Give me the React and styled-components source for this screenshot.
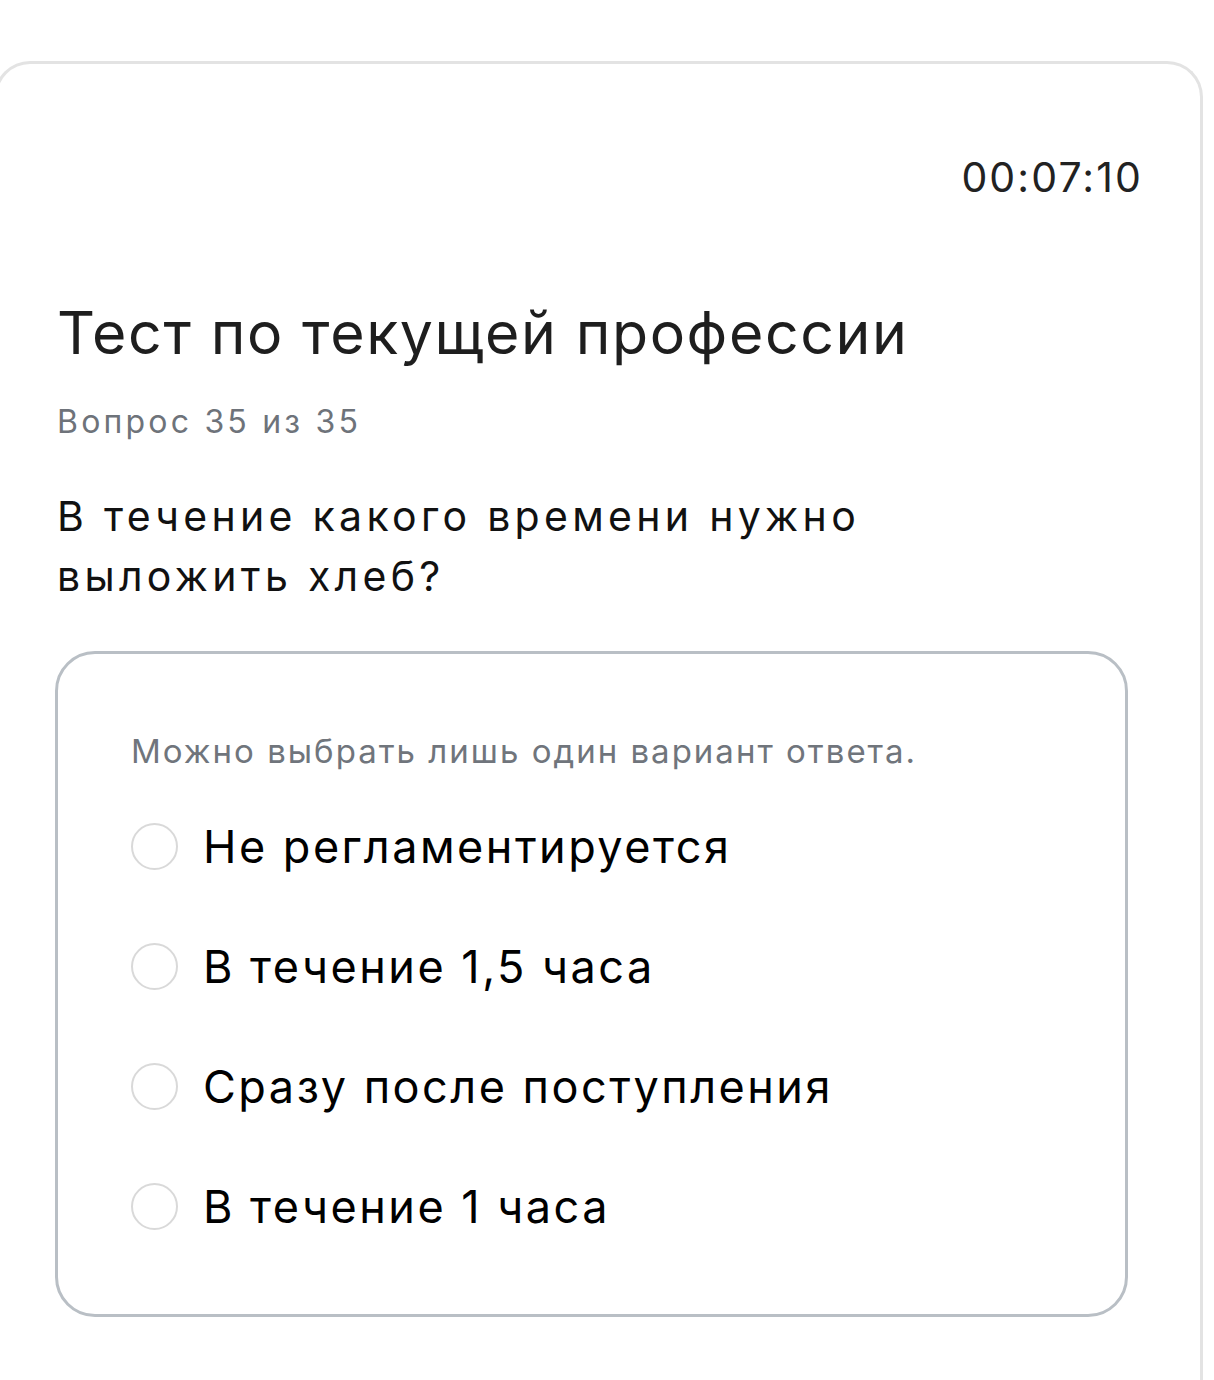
import React from 'react';
import styled, { createGlobalStyle } from 'styled-components';

const GlobalStyle = createGlobalStyle`
  html, body {
    margin: 0;
    padding: 0;
    background: #ffffff;
    overflow: hidden;
  }
  body {
    font-family: Inter, "Noto Sans", sans-serif;
  }
`;

const Page = styled.div`
  padding-top: 61px;
  margin-left: -6px;
  width: 1209px;
`;

const Card = styled.div`
  box-sizing: border-box;
  min-height: 1400px;
  border: 3px solid #e3e3e3;
  border-bottom: none;
  border-radius: 36px 36px 0 0;
  padding: 89px 61px 0 60px;
  display: flex;
  flex-direction: column;
`;

const Timer = styled.div`
  align-self: flex-end;
  margin-right: -4px;
  font-size: 41px;
  line-height: 48px;
  letter-spacing: 2.1px;
  color: #222222;
`;

const Title = styled.h1`
  margin: 97px 0 0;
  font-size: 59px;
  line-height: 70px;
  font-weight: 400;
  letter-spacing: 1.6px;
  color: #1e1e1e;
`;

const Counter = styled.div`
  margin-top: 34px;
  font-size: 32px;
  line-height: 40px;
  letter-spacing: 3.2px;
  color: #6e737a;
`;

const Question = styled.p`
  margin: 44px 0 0;
  max-width: 880px;
  font-size: 41px;
  line-height: 60px;
  letter-spacing: 4.3px;
  color: #111111;
`;

const AnswerBox = styled.div`
  box-sizing: border-box;
  margin: 45px 0 0 -2px;
  width: 1073px;
  border: 3px solid #b9bfc5;
  border-radius: 40px;
  padding: 77px 40px 84px 73px;
  display: flex;
  flex-direction: column;
`;

const Hint = styled.div`
  font-size: 33px;
  line-height: 40px;
  letter-spacing: 2px;
  color: #70757c;
  white-space: nowrap;
`;

const Options = styled.div`
  margin-top: 52px;
  display: flex;
  flex-direction: column;
  gap: 73px;
`;

const Option = styled.label`
  display: flex;
  align-items: center;
  gap: 25px;
  height: 47px;
  cursor: pointer;
`;

const Radio = styled.span`
  box-sizing: border-box;
  flex: none;
  width: 47px;
  height: 47px;
  border-radius: 50%;
  border: 2.5px solid #d9d9d9;
  background: #ffffff;
`;

const OptionText = styled.span`
  font-size: 45px;
  letter-spacing: 2.5px;
  color: #000000;
  white-space: nowrap;
`;

const answers = [
  'Не регламентируется',
  'В течение 1,5 часа',
  'Сразу после поступления',
  'В течение 1 часа',
];

export default function App() {
  return (
    <>
      <GlobalStyle />
      <Page>
        <Card>
          <Timer>00:07:10</Timer>
          <Title>Тест по текущей профессии</Title>
          <Counter>Вопрос 35 из 35</Counter>
          <Question>В течение какого времени нужно выложить хлеб?</Question>
          <AnswerBox>
            <Hint>Можно выбрать лишь один вариант ответа.</Hint>
            <Options>
              {answers.map((a) => (
                <Option key={a}>
                  <Radio />
                  <OptionText>{a}</OptionText>
                </Option>
              ))}
            </Options>
          </AnswerBox>
        </Card>
      </Page>
    </>
  );
}
